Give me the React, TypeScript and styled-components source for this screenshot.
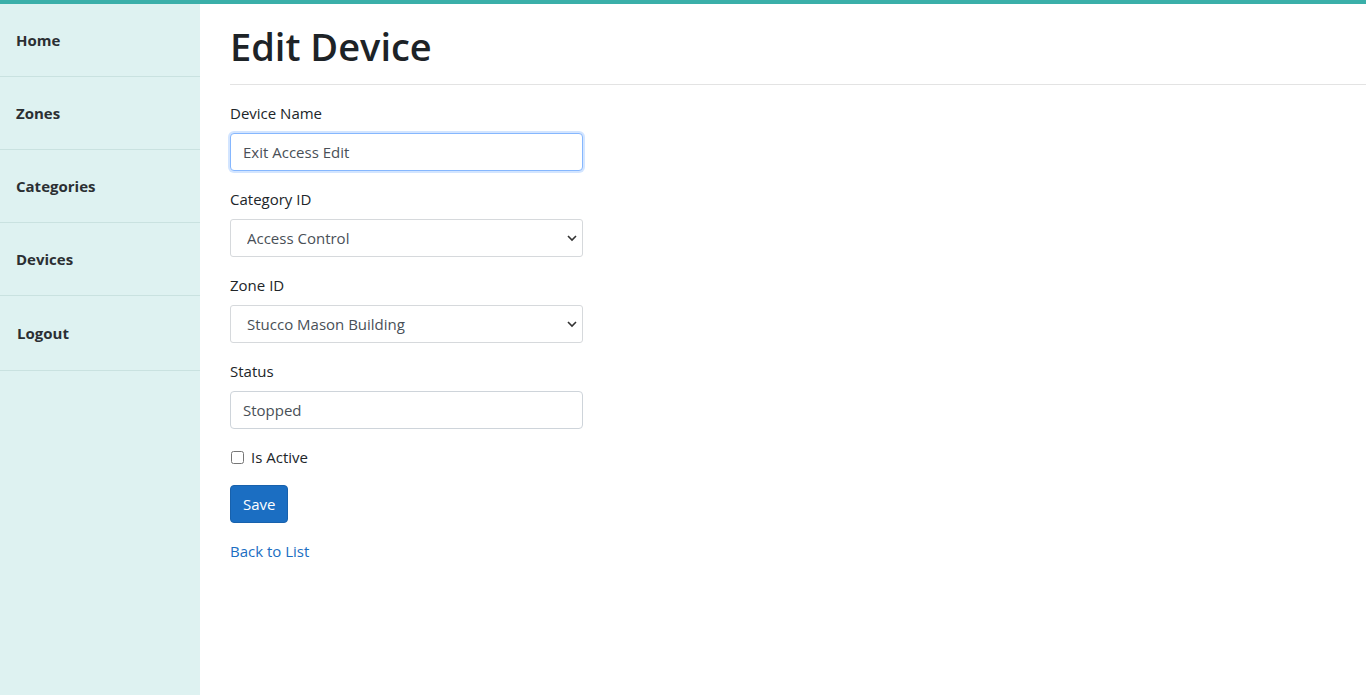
import React, { useState } from "react";
import styled, { createGlobalStyle } from "styled-components";

const GlobalStyle = createGlobalStyle`
  body {
    margin: 0;
    font-family: "Open Sans", "Noto Sans", sans-serif;
    font-size: 15px;
    color: #212529;
    background: #fff;
  }
  * {
    box-sizing: border-box;
  }
`;

const Page = styled.div`
  min-height: 100vh;
  display: flex;
  border-top: 4px solid #3aafa9;
`;

const Sidebar = styled.nav`
  width: 200px;
  flex-shrink: 0;
  background: #def2f1;
  display: flex;
  flex-direction: column;
`;

const NavItem = styled.a<{ $tall?: boolean }>`
  display: flex;
  align-items: center;
  height: ${(p) => (p.$tall ? 75 : 73)}px;
  padding-left: ${(p) => (p.$tall ? 17 : 16)}px;
  border-bottom: 1px solid #c9e2e0;
  font-weight: 700;
  font-size: 15px;
  color: #2b2f33;
  text-decoration: none;
  cursor: pointer;
`;

const Main = styled.main`
  flex: 1;
  padding-left: 30px;
`;

const Header = styled.header`
  border-bottom: 1px solid #e3e3e3;
  padding: 18px 0 14px;
`;

const Title = styled.h1`
  margin: 0;
  font-size: 38px;
  line-height: 48px;
  font-weight: 600;
  color: #1d2327;
`;

const Form = styled.form`
  width: 353px;
  padding-top: 16px;
`;

const Group = styled.div`
  margin-bottom: 16px;
`;

const Label = styled.label`
  display: block;
  line-height: 24px;
  margin-bottom: 8px;
  color: #212529;
`;

const TextInput = styled.input`
  display: block;
  width: 100%;
  height: 38px;
  padding: 0 12px;
  font: inherit;
  color: #495057;
  caret-color: #212529;
  background: #fff;
  border: 1px solid #ced4da;
  border-radius: 4px;
  outline: none;

  &:focus {
    border-color: #86b7fe;
    box-shadow: 0 0 0 2px rgba(13, 110, 253, 0.18);
  }
`;

const SelectWrap = styled.div`
  position: relative;
`;

const Select = styled.select`
  display: block;
  width: 100%;
  height: 38px;
  padding: 0 30px 0 16px;
  font: inherit;
  color: #495057;
  background: #fff;
  border: 1px solid #d6d9dc;
  border-radius: 3px;
  appearance: none;
  outline: none;
`;

// native-looking dropdown arrow drawn over the select
const Chevron = styled.svg`
  position: absolute;
  right: 6px;
  top: 14px;
  pointer-events: none;
`;

const CheckRow = styled.label`
  display: flex;
  align-items: center;
  gap: 7px;
  line-height: 24px;
`;

const Checkbox = styled.input`
  width: 13px;
  height: 13px;
  margin: 0 0 0 1px;
`;

const SaveButton = styled.button`
  height: 38px;
  padding: 0 12px;
  font: inherit;
  color: #fff;
  background: #1b6ec2;
  border: 1px solid #1861ac;
  border-radius: 4px;
  cursor: pointer;
`;

const BackLink = styled.a`
  display: inline-block;
  line-height: 24px;
  color: #1b6ec2;
  text-decoration: none;
`;

function SelectField({ value, options }: { value: string; options: string[] }) {
  return (
    <SelectWrap>
      <Select defaultValue={value}>
        {options.map((o) => (
          <option key={o}>{o}</option>
        ))}
      </Select>
      <Chevron width="10" height="10" viewBox="0 0 10 10">
        <path d="M1 3 L5 7 L9 3" fill="none" stroke="#333" strokeWidth="1.6" />
      </Chevron>
    </SelectWrap>
  );
}

export default function App() {
  const [name, setName] = useState("Exit Access Edit");
  const [status, setStatus] = useState("Stopped");

  return (
    <>
      <GlobalStyle />
      <Page>
        <Sidebar>
          <NavItem>Home</NavItem>
          <NavItem>Zones</NavItem>
          <NavItem>Categories</NavItem>
          <NavItem>Devices</NavItem>
          <NavItem $tall>Logout</NavItem>
        </Sidebar>
        <Main>
          <Header>
            <Title>Edit Device</Title>
          </Header>
          <Form onSubmit={(e) => e.preventDefault()}>
            <Group>
              <Label>Device Name</Label>
              <TextInput
                autoFocus
                value={name}
                onChange={(e) => setName(e.target.value)}
              />
            </Group>
            <Group>
              <Label>Category ID</Label>
              <SelectField
                value="Access Control"
                options={["Access Control", "Lighting", "HVAC"]}
              />
            </Group>
            <Group>
              <Label>Zone ID</Label>
              <SelectField
                value="Stucco Mason Building"
                options={["Stucco Mason Building", "Main Hall"]}
              />
            </Group>
            <Group>
              <Label>Status</Label>
              <TextInput
                value={status}
                onChange={(e) => setStatus(e.target.value)}
              />
            </Group>
            <Group>
              <CheckRow>
                <Checkbox type="checkbox" />
                Is Active
              </CheckRow>
            </Group>
            <Group>
              <SaveButton type="submit">Save</SaveButton>
            </Group>
          </Form>
          <BackLink href="#">Back to List</BackLink>
        </Main>
      </Page>
    </>
  );
}
